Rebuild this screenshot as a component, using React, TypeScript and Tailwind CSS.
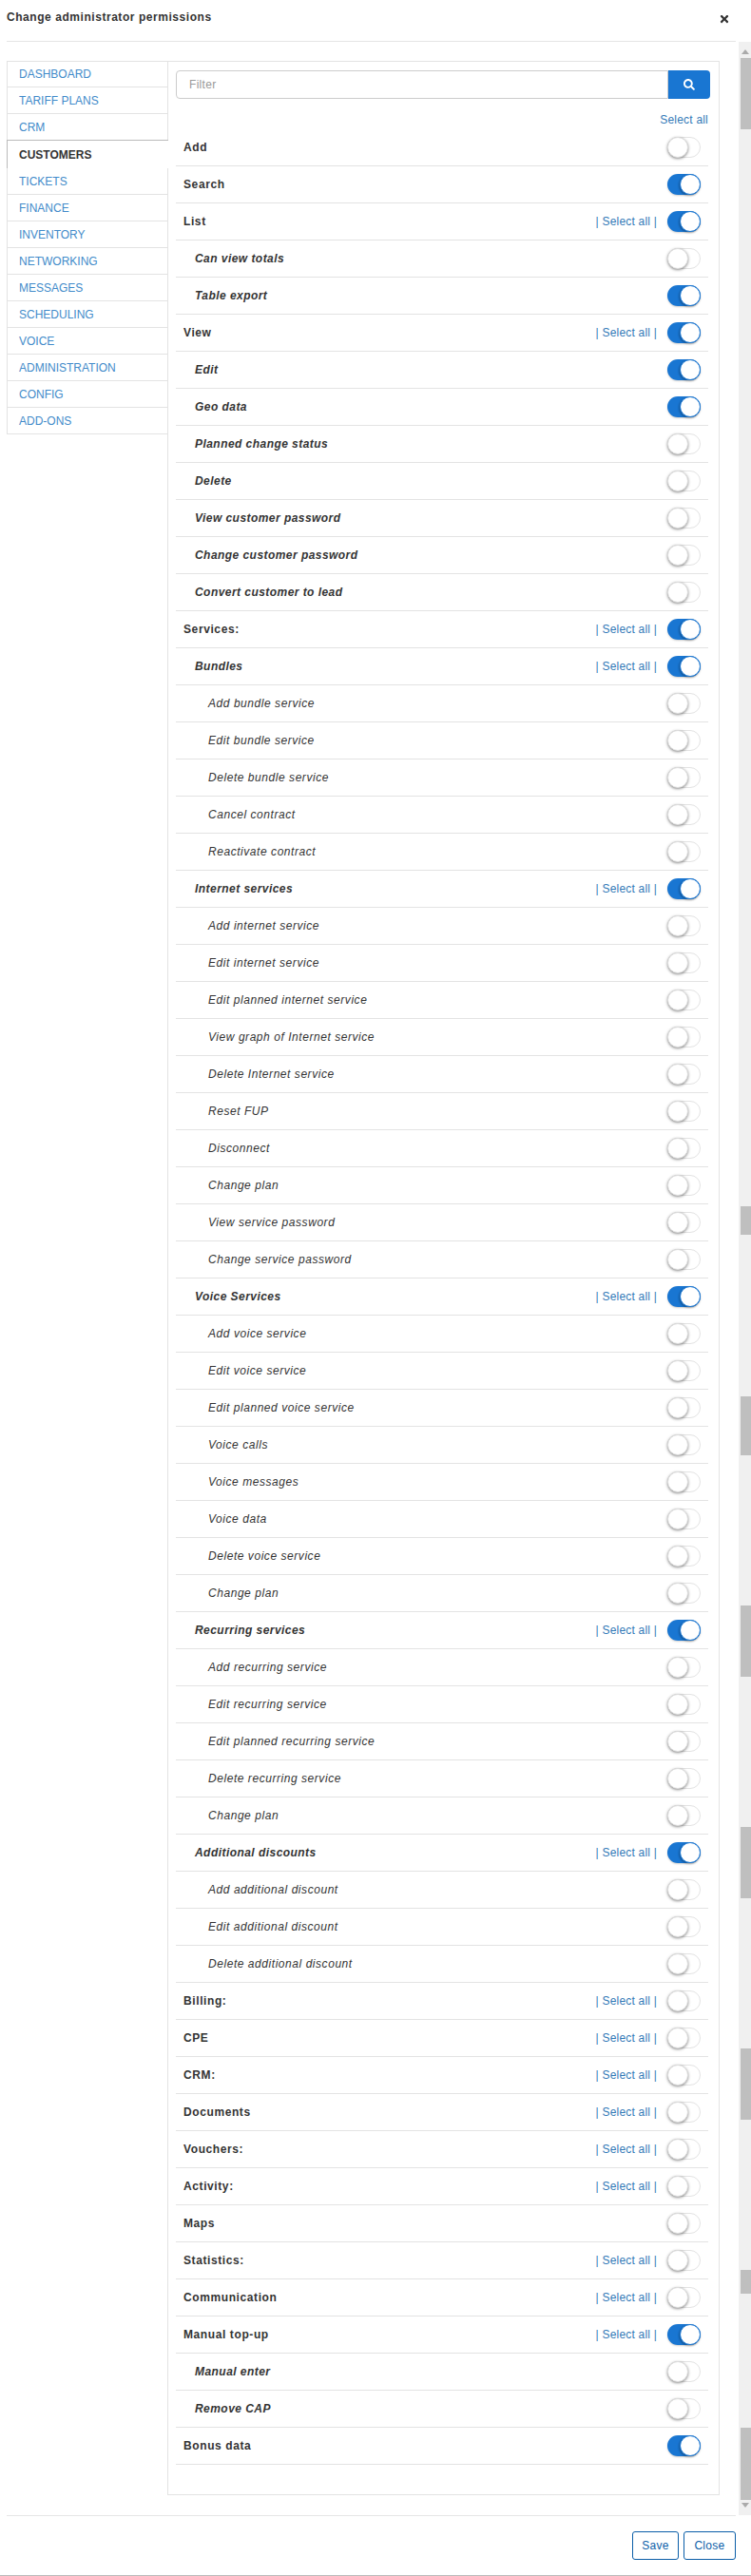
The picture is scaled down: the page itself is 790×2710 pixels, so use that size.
import { FaSearch, FaTimes } from 'react-icons/fa';

const tabs = ['Dashboard', 'Tariff plans', 'CRM', 'Customers', 'Tickets', 'Finance', 'Inventory', 'Networking', 'Messages', 'Scheduling', 'Voice', 'Administration', 'Config', 'Add-ons'];

// level: 0 = bold, 1 = bold italic, 2 = plain italic
type Row = { label: string; level: 0 | 1 | 2; on?: boolean; all?: boolean };

const sub = (...labels: string[]): Row[] => labels.map((label) => ({ label, level: 2 }));

const rows: Row[] = [
    { label: 'Add', level: 0 },
    { label: 'Search', level: 0, on: true },
    { label: 'List', level: 0, on: true, all: true },
    { label: 'Can view totals', level: 1 },
    { label: 'Table export', level: 1, on: true },
    { label: 'View', level: 0, on: true, all: true },
    { label: 'Edit', level: 1, on: true },
    { label: 'Geo data', level: 1, on: true },
    { label: 'Planned change status', level: 1 },
    { label: 'Delete', level: 1 },
    { label: 'View customer password', level: 1 },
    { label: 'Change customer password', level: 1 },
    { label: 'Convert customer to lead', level: 1 },
    { label: 'Services:', level: 0, on: true, all: true },
    { label: 'Bundles', level: 1, on: true, all: true },
    ...sub('Add bundle service', 'Edit bundle service', 'Delete bundle service', 'Cancel contract', 'Reactivate contract'),
    { label: 'Internet services', level: 1, on: true, all: true },
    ...sub('Add internet service', 'Edit internet service', 'Edit planned internet service', 'View graph of Internet service', 'Delete Internet service', 'Reset FUP', 'Disconnect', 'Change plan', 'View service password', 'Change service password'),
    { label: 'Voice Services', level: 1, on: true, all: true },
    ...sub('Add voice service', 'Edit voice service', 'Edit planned voice service', 'Voice calls', 'Voice messages', 'Voice data', 'Delete voice service', 'Change plan'),
    { label: 'Recurring services', level: 1, on: true, all: true },
    ...sub('Add recurring service', 'Edit recurring service', 'Edit planned recurring service', 'Delete recurring service', 'Change plan'),
    { label: 'Additional discounts', level: 1, on: true, all: true },
    ...sub('Add additional discount', 'Edit additional discount', 'Delete additional discount'),
    { label: 'Billing:', level: 0, all: true },
    { label: 'CPE', level: 0, all: true },
    { label: 'CRM:', level: 0, all: true },
    { label: 'Documents', level: 0, all: true },
    { label: 'Vouchers:', level: 0, all: true },
    { label: 'Activity:', level: 0, all: true },
    { label: 'Maps', level: 0 },
    { label: 'Statistics:', level: 0, all: true },
    { label: 'Communication', level: 0, all: true },
    { label: 'Manual top-up', level: 0, on: true, all: true },
    { label: 'Manual enter', level: 1 },
    { label: 'Remove CAP', level: 1 },
    { label: 'Bonus data', level: 0, on: true },
];

// scrollbar thumb pieces: gap before, height
const thumbs = [
    [3, 75],
    [1133, 30],
    [170, 62],
    [158, 75],
    [158, 75],
    [158, 75],
    [158, 25],
    [141, 76],
];

function Toggle({ on }: { on?: boolean }) {
    if (on) {
        return (
            <div className="h-[22px] w-[35px] rounded-full bg-[#1976d2] flex justify-end shadow-[0_1px_2px_rgba(0,0,0,0.2)]">
                <div className="h-[22px] w-[22px] rounded-full bg-white border border-[#1976d2] shadow-[-1px_1px_2px_rgba(0,0,0,0.25)]" />
            </div>
        );
    }
    return (
        <div className="h-[22px] w-[35px] rounded-full bg-white border border-[#e3e3e3]">
            <div className="-ml-px -mt-px h-[22px] w-[22px] rounded-full bg-white border border-[#ddd] shadow-[0_1px_3px_rgba(0,0,0,0.45)]" />
        </div>
    );
}

function PermissionRow({ row }: { row: Row }) {
    const labelClass =
        row.level === 0
            ? 'pl-2 font-bold tracking-[0.6px]'
            : row.level === 1
              ? 'pl-5 font-bold italic tracking-[0.45px]'
              : 'pl-[34px] italic tracking-[0.55px]';
    return (
        <div className="h-[39px] flex items-center border-b border-[#e3e3e3] pr-2">
            <span className={`flex-1 text-[12px] text-[#333] ${labelClass}`}>{row.label}</span>
            {row.all && <span className="mr-[11px] text-[12px] text-[#337ab7] tracking-[0.2px]">| Select all |</span>}
            <Toggle on={row.on} />
        </div>
    );
}

export default function App() {
    return (
        <div className="w-[790px] h-[2710px] flex flex-col bg-white border-b border-[#bbb] font-['Liberation_Sans',Arial,sans-serif] text-[#333]">
            <div className="h-[44px] ml-[7px] mr-[16px] border-b border-[#e5e5e5] flex justify-between pt-[9px] shrink-0">
                <h1 className="text-[12px] font-bold leading-[18px] tracking-[0.55px]">Change administrator permissions</h1>
                <FaTimes className="text-[12px] mt-[5px] mr-[6px] text-[#333]" />
            </div>

            <div className="flex-1 flex min-h-0">
                <div className="w-[777px] pl-[7px] pt-[20px] flex items-start">
                    <div className="w-[170px] shrink-0 -mr-px relative z-10">
                        {tabs.map((tab, i) =>
                            tab === 'Customers' ? (
                                <div key={tab} className="h-[28px] -mt-px pt-px box-content flex items-center pl-[12px] bg-white border-t border-l border-[#bbb] text-[12px] font-bold uppercase text-[#333]">
                                    {tab}
                                </div>
                            ) : (
                                <div key={tab} className={`h-[28px] flex items-center pl-[12px] border-x border-b border-[#e3e3e3] text-[12px] uppercase text-[#428bca] ${i === 0 ? 'border-t' : ''}`}>
                                    {tab}
                                </div>
                            ),
                        )}
                    </div>

                    <div className="w-[581px] shrink-0 border border-[#e3e3e3] pt-[9px] pl-2 pr-[9px] pb-[31px]">
                        <div className="flex h-[30px]">
                            <input
                                placeholder="Filter"
                                className="flex-1 min-w-0 border border-[#ccc] rounded-l-[4px] px-[13px] text-[12px] tracking-[0.3px] outline-none placeholder:text-[#999]"
                            />
                            <div className="w-[44px] bg-[#1976d2] rounded-r-[4px] flex items-center justify-center text-white">
                                <FaSearch className="text-[12px]" />
                            </div>
                        </div>
                        <div className="h-[32px] pr-[2px] pb-px flex items-end justify-end text-[12px] text-[#337ab7] tracking-[0.2px] leading-[17px]">Select all</div>
                        <div className="mr-[2px]">
                            {rows.map((row, i) => (
                                <PermissionRow key={i} row={row} />
                            ))}
                        </div>
                    </div>
                </div>

                <div className="w-[13px] bg-[#f0f0f0] pl-[2px] relative">
                    <div className="absolute left-[3px] top-[8px] w-0 h-0 border-x-[4px] border-x-transparent border-b-[5px] border-b-[#aaa]" />
                    <div className="pt-[14px]">
                        {thumbs.map(([gap, height], i) => (
                            <div key={i} className="bg-[#bfbfbf]" style={{ marginTop: gap, height }} />
                        ))}
                    </div>
                    <div className="absolute left-[3px] bottom-[8px] w-0 h-0 border-x-[4px] border-x-transparent border-t-[5px] border-t-[#aaa]" />
                </div>
            </div>

            <div className="h-[63px] shrink-0 ml-[7px] mr-[16px] border-t border-[#e5e5e5] flex justify-end items-start pt-[16px] gap-[5px]">
                <button className="h-[30px] w-[49px] border border-[#0b5ea8] rounded-[3px] text-[12px] text-[#0b5ea8] tracking-[0.3px]">Save</button>
                <button className="h-[30px] w-[55px] border border-[#0b5ea8] rounded-[3px] text-[12px] text-[#0b5ea8] tracking-[0.3px]">Close</button>
            </div>
        </div>
    );
}
